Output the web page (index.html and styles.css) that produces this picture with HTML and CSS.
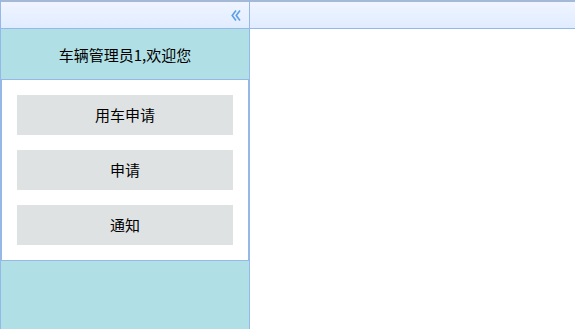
FILE: index.html
```html
<!DOCTYPE html>
<html lang="zh">
<head>
<meta charset="utf-8">
<title>车辆管理</title>
<link rel="stylesheet" href="styles.css">
</head>
<body>
<div class="layout">
  <div class="west">
    <div class="panel-header">
      <span class="collapse" title="收起">
        <svg width="10" height="11" viewBox="0 0 10 11" aria-hidden="true">
          <polyline points="5,0.5 1.2,5.5 5,10.5" fill="none" stroke="#5d9fe6" stroke-width="1.6"/>
          <polyline points="9,0.5 5.2,5.5 9,10.5" fill="none" stroke="#5d9fe6" stroke-width="1.6"/>
        </svg>
      </span>
    </div>
    <div class="west-body">
      <div class="welcome">车辆管理员1,欢迎您</div>
      <div class="menu">
        <div class="menu-item">用车申请</div>
        <div class="menu-item">申请</div>
        <div class="menu-item">通知</div>
      </div>
      <div class="filler"></div>
    </div>
  </div>
  <div class="center">
    <div class="panel-header"></div>
    <div class="center-body"></div>
  </div>
</div>
</body>
</html>
```
FILE: styles.css
```css
html, body {
  margin: 0;
  padding: 0;
  height: 100%;
}
body {
  font-family: "Noto Sans CJK SC", "Liberation Sans", sans-serif;
  font-size: 15px;
  color: #000;
  background: #fff;
}
.layout {
  display: flex;
  height: 100%;
}
.west {
  width: 250px;
  flex: none;
  display: flex;
  flex-direction: column;
  box-sizing: border-box;
  border-left: 1px solid #95b8e7;
  border-right: 1px solid #95b8e7;
}
.panel-header {
  height: 26px;
  flex: none;
  border-top: 2px solid #a4b9d6;
  border-bottom: 1px solid #95b8e7;
  background: linear-gradient(to bottom, #eff5ff 0, #e0ecff 100%);
  display: flex;
  align-items: center;
  justify-content: flex-end;
}
.collapse {
  display: flex;
  margin-right: 8px;
  margin-top: 1px;
}
.west-body {
  flex: 1;
  display: flex;
  flex-direction: column;
  background: #b0dfe5;
}
.welcome {
  height: 50px;
  display: flex;
  align-items: center;
  justify-content: center;
}
.menu {
  background: #fff;
  border: 1px solid #95b8e7;
  padding: 15px;
  display: flex;
  flex-direction: column;
  gap: 15px;
}
.menu-item {
  height: 40px;
  box-sizing: border-box;
  padding-bottom: 2px;
  background: #dfe2e3;
  display: flex;
  align-items: center;
  justify-content: center;
}
.filler {
  flex: 1;
}
.center {
  flex: 1;
  display: flex;
  flex-direction: column;
}
.center-body {
  flex: 1;
  background: #fff;
}
```
